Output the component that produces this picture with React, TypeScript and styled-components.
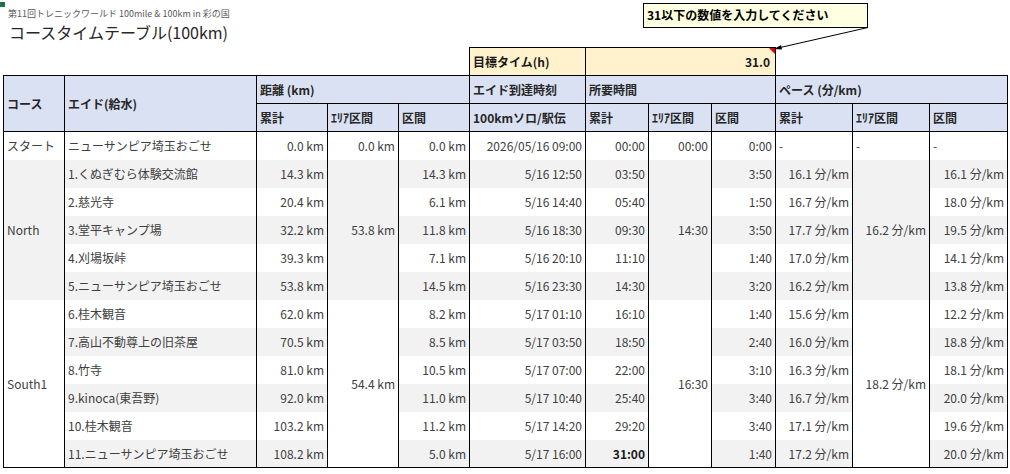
import styled, { createGlobalStyle } from "styled-components";

const GlobalStyle = createGlobalStyle`
  body {
    margin: 0;
    background: #fff;
    font-family: "Noto Sans CJK JP", "Noto Sans", sans-serif;
  }
`;

type Row = {
  name: string;
  cum: string;
  seg: string;
  time: string;
  tcum: string;
  tseg: string;
  pcum: string;
  pseg: string;
  strong?: boolean;
};

type Section = {
  course: string;
  area: string;
  tarea: string;
  parea: string;
  rows: Row[];
};

const sections: Section[] = [
  {
    course: "North",
    area: "53.8 km",
    tarea: "14:30",
    parea: "16.2 分/km",
    rows: [
      { name: "1.くぬぎむら体験交流館", cum: "14.3 km", seg: "14.3 km", time: "5/16 12:50", tcum: "03:50", tseg: "3:50", pcum: "16.1 分/km", pseg: "16.1 分/km" },
      { name: "2.慈光寺", cum: "20.4 km", seg: "6.1 km", time: "5/16 14:40", tcum: "05:40", tseg: "1:50", pcum: "16.7 分/km", pseg: "18.0 分/km" },
      { name: "3.堂平キャンプ場", cum: "32.2 km", seg: "11.8 km", time: "5/16 18:30", tcum: "09:30", tseg: "3:50", pcum: "17.7 分/km", pseg: "19.5 分/km" },
      { name: "4.刈場坂峠", cum: "39.3 km", seg: "7.1 km", time: "5/16 20:10", tcum: "11:10", tseg: "1:40", pcum: "17.0 分/km", pseg: "14.1 分/km" },
      { name: "5.ニューサンピア埼玉おごせ", cum: "53.8 km", seg: "14.5 km", time: "5/16 23:30", tcum: "14:30", tseg: "3:20", pcum: "16.2 分/km", pseg: "13.8 分/km" },
    ],
  },
  {
    course: "South1",
    area: "54.4 km",
    tarea: "16:30",
    parea: "18.2 分/km",
    rows: [
      { name: "6.桂木観音", cum: "62.0 km", seg: "8.2 km", time: "5/17 01:10", tcum: "16:10", tseg: "1:40", pcum: "15.6 分/km", pseg: "12.2 分/km" },
      { name: "7.高山不動尊上の旧茶屋", cum: "70.5 km", seg: "8.5 km", time: "5/17 03:50", tcum: "18:50", tseg: "2:40", pcum: "16.0 分/km", pseg: "18.8 分/km" },
      { name: "8.竹寺", cum: "81.0 km", seg: "10.5 km", time: "5/17 07:00", tcum: "22:00", tseg: "3:10", pcum: "16.3 分/km", pseg: "18.1 分/km" },
      { name: "9.kinoca(東吾野)", cum: "92.0 km", seg: "11.0 km", time: "5/17 10:40", tcum: "25:40", tseg: "3:40", pcum: "16.7 分/km", pseg: "20.0 分/km" },
      { name: "10.桂木観音", cum: "103.2 km", seg: "11.2 km", time: "5/17 14:20", tcum: "29:20", tseg: "3:40", pcum: "17.1 分/km", pseg: "19.6 分/km" },
      { name: "11.ニューサンピア埼玉おごせ", cum: "108.2 km", seg: "5.0 km", time: "5/17 16:00", tcum: "31:00", tseg: "1:40", pcum: "17.2 分/km", pseg: "20.0 分/km", strong: true },
    ],
  },
];

const widths = [61, 192, 71, 71, 71, 116, 63, 63, 64, 77, 77, 78];

const Page = styled.div`
  position: relative;
  width: 1010px;
  height: 474px;
  overflow: hidden;
  box-sizing: border-box;
  padding: 7px 0 0 3px;
`;

const CellMark = styled.span`
  position: absolute;
  left: 0;
  top: 2px;
  width: 5px;
  height: 5px;
  background: #217346;
`;

const Event = styled.div`
  margin-left: 5px;
  font-size: 9px;
  line-height: 14px;
  color: #595959;
  white-space: nowrap;
`;

const Title = styled.h1`
  margin: 1px 0 5px 6px;
  font-size: 16px;
  font-weight: 400;
  line-height: 20px;
  color: #262626;
  white-space: nowrap;
`;

const Sheet = styled.table`
  border-collapse: collapse;
  table-layout: fixed;
  width: 1004px;
  font-size: 12px;
  color: #404040;

  tr {
    height: 28px;
  }
`;

const Blank = styled.td`
  padding: 0;
`;

const TargetCell = styled.td<{ $right?: boolean }>`
  position: relative;
  border: 1px solid #000;
  background: #fff2cc;
  color: #1a1a1a;
  font-weight: 700;
  padding: 0 5px 0 3px;
  text-align: ${(p) => (p.$right ? "right" : "left")};
  white-space: nowrap;
`;

const RedCorner = styled.span`
  position: absolute;
  top: 0;
  right: 0;
  width: 0;
  height: 0;
  border-left: 6px solid transparent;
  border-top: 6px solid #e00000;
`;

const HeadCell = styled.th`
  border: 1px solid #000;
  background: #d9e1f2;
  color: #262626;
  font-weight: 700;
  text-align: left;
  padding: 0 3px;
  white-space: nowrap;
  overflow: hidden;
`;

const Body = styled.tbody`
  border: 1px solid #000;
`;

const Cell = styled.td<{ $right?: boolean; $shade?: boolean; $strong?: boolean }>`
  border-left: 1px solid #000;
  border-right: 1px solid #000;
  background: ${(p) => (p.$shade ? "#f2f2f2" : "#fff")};
  text-align: ${(p) => (p.$right ? "right" : "left")};
  font-weight: ${(p) => (p.$strong ? 700 : 400)};
  color: ${(p) => (p.$strong ? "#1a1a1a" : "#404040")};
  padding: 0 3px;
  white-space: nowrap;
  overflow: hidden;
`;

const Note = styled.div`
  position: absolute;
  left: 643px;
  top: 3px;
  width: 225px;
  height: 25px;
  box-sizing: border-box;
  border: 1px solid #000;
  background: #ffffe1;
  color: #000;
  font-size: 12px;
  font-weight: 700;
  line-height: 21px;
  padding-left: 3px;
  white-space: nowrap;
`;

const Leader = styled.svg`
  position: absolute;
  left: 0;
  top: 0;
  pointer-events: none;
`;

function SectionRows({ section, offset }: { section: Section; offset: number }) {
  const span = section.rows.length;
  const blockShade = offset % 2 === 1;
  return (
    <>
      {section.rows.map((r, i) => {
        const shade = (offset + i) % 2 === 1;
        const first = i === 0;
        return (
          <tr key={r.name}>
            {first && (
              <Cell rowSpan={span} $shade={blockShade}>
                {section.course}
              </Cell>
            )}
            <Cell $shade={shade}>{r.name}</Cell>
            <Cell $shade={shade} $right>{r.cum}</Cell>
            {first && (
              <Cell rowSpan={span} $shade={blockShade} $right>
                {section.area}
              </Cell>
            )}
            <Cell $shade={shade} $right>{r.seg}</Cell>
            <Cell $shade={shade} $right>{r.time}</Cell>
            <Cell $shade={shade} $right $strong={r.strong}>{r.tcum}</Cell>
            {first && (
              <Cell rowSpan={span} $shade={blockShade} $right>
                {section.tarea}
              </Cell>
            )}
            <Cell $shade={shade} $right>{r.tseg}</Cell>
            <Cell $shade={shade} $right>{r.pcum}</Cell>
            {first && (
              <Cell rowSpan={span} $shade={blockShade} $right>
                {section.parea}
              </Cell>
            )}
            <Cell $shade={shade} $right>{r.pseg}</Cell>
          </tr>
        );
      })}
    </>
  );
}

export default function App() {
  return (
    <Page>
      <GlobalStyle />
      <CellMark />
      <Event>第11回トレニックワールド 100mile &amp; 100km in 彩の国</Event>
      <Title>コースタイムテーブル(100km)</Title>
      <Sheet>
        <colgroup>
          {widths.map((w, i) => (
            <col key={i} style={{ width: w }} />
          ))}
        </colgroup>
        <thead>
          <tr>
            <Blank colSpan={5} />
            <TargetCell>目標タイム(h)</TargetCell>
            <TargetCell colSpan={3} $right>
              31.0
              <RedCorner />
            </TargetCell>
            <Blank colSpan={3} />
          </tr>
          <tr>
            <HeadCell rowSpan={2}>コース</HeadCell>
            <HeadCell rowSpan={2}>エイド(給水)</HeadCell>
            <HeadCell colSpan={3}>距離 (km)</HeadCell>
            <HeadCell>エイド到達時刻</HeadCell>
            <HeadCell colSpan={3}>所要時間</HeadCell>
            <HeadCell colSpan={3}>ペース (分/km)</HeadCell>
          </tr>
          <tr>
            <HeadCell>累計</HeadCell>
            <HeadCell>ｴﾘｱ区間</HeadCell>
            <HeadCell>区間</HeadCell>
            <HeadCell>100kmソロ/駅伝</HeadCell>
            <HeadCell>累計</HeadCell>
            <HeadCell>ｴﾘｱ区間</HeadCell>
            <HeadCell>区間</HeadCell>
            <HeadCell>累計</HeadCell>
            <HeadCell>ｴﾘｱ区間</HeadCell>
            <HeadCell>区間</HeadCell>
          </tr>
        </thead>
        <Body>
          <tr>
            <Cell>スタート</Cell>
            <Cell>ニューサンピア埼玉おごせ</Cell>
            <Cell $right>0.0 km</Cell>
            <Cell $right>0.0 km</Cell>
            <Cell $right>0.0 km</Cell>
            <Cell $right>2026/05/16 09:00</Cell>
            <Cell $right>00:00</Cell>
            <Cell $right>00:00</Cell>
            <Cell $right>0:00</Cell>
            <Cell>-</Cell>
            <Cell>-</Cell>
            <Cell>-</Cell>
          </tr>
          <SectionRows section={sections[0]} offset={1} />
          <SectionRows section={sections[1]} offset={6} />
        </Body>
      </Sheet>
      <Note>31以下の数値を入力してください</Note>
      <Leader width={1010} height={60} viewBox="0 0 1010 60">
        <line x1={868} y1={27.5} x2={778} y2={48} stroke="#000" strokeWidth={1} />
        <polygon points="774,49 781,45 782,49.5" fill="#000" />
      </Leader>
    </Page>
  );
}
